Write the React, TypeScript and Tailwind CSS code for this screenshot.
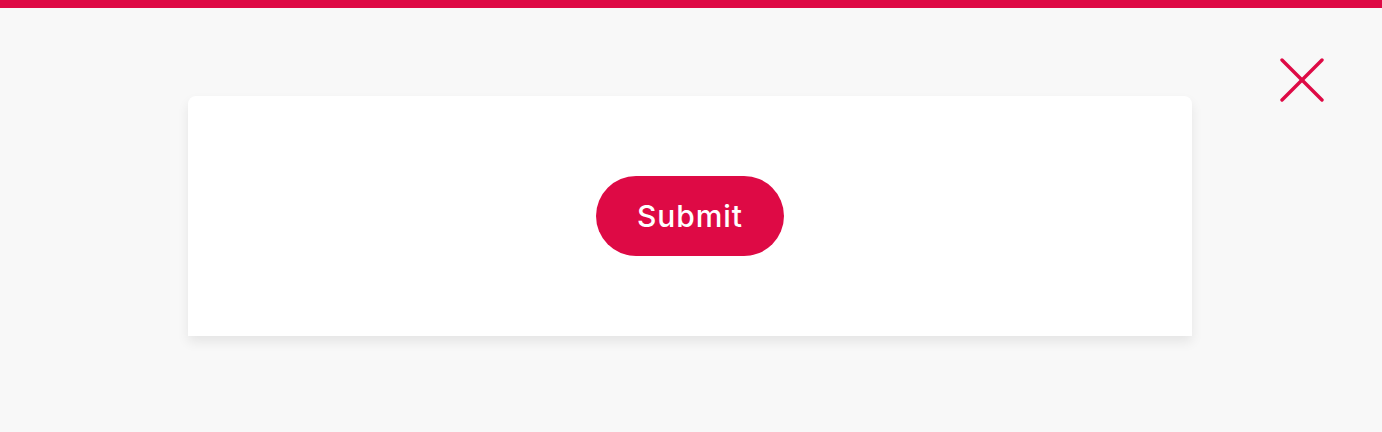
export default function App() {
  return (
    <div className="relative min-h-[432px] bg-[#f8f8f8] font-['Inter',sans-serif]">
      <div className="h-2 bg-[#de0a45]" />

      {/* Close button */}
      <button className="absolute right-[58px] top-[58px] w-11 h-11 flex items-center justify-center text-[#de0a45]">
        <svg width="44" height="44" viewBox="0 0 44 44" fill="none" stroke="currentColor" strokeWidth="3.4" strokeLinecap="round">
          <line x1="2" y1="2" x2="42" y2="42" />
          <line x1="42" y1="2" x2="2" y2="42" />
        </svg>
      </button>

      <div className="pt-[88px] pr-0.5 flex justify-center">
        <div className="w-[1004px] h-[240px] bg-white rounded-t-lg shadow-[0_6px_12px_rgba(0,0,0,0.08)] flex items-center justify-center">
          <button className="w-[188px] h-[80px] rounded-full bg-[#de0a45] text-white text-[30px] font-medium tracking-[0.03em]">
            Submit
          </button>
        </div>
      </div>
    </div>
  );
}
